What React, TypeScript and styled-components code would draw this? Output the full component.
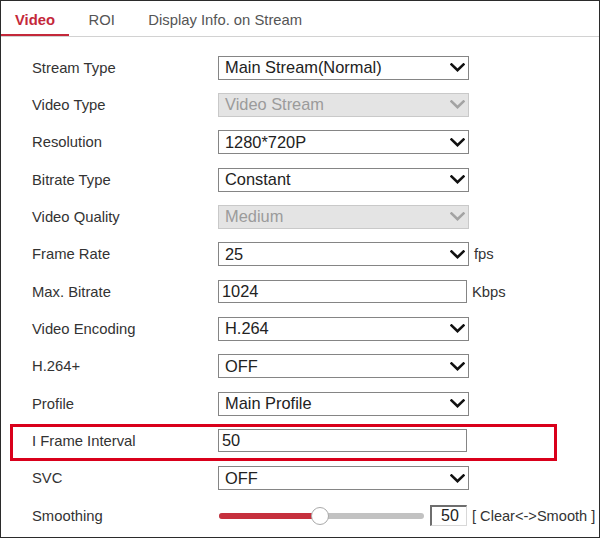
import React from "react";
import styled, { createGlobalStyle, css } from "styled-components";

const Global = createGlobalStyle`
  html, body { margin: 0; padding: 0; background: #fff; }
  body { font-family: "Liberation Sans", Arial, sans-serif; }
  * { box-sizing: border-box; }
`;

const Frame = styled.div`
  width: 600px;
  height: 538px;
  border: 1px solid #2b2b2b;
  background: #fff;
  overflow: hidden;
`;

const TabBar = styled.div`
  display: flex;
  gap: 6px;
  height: 36px;
  border-bottom: 1px solid #d2d2d2;
`;

const Tab = styled.div<{ $active?: boolean }>`
  display: flex;
  align-items: center;
  padding: 2px 13.5px 0 14px;
  font-size: 14.8px;
  color: #555;
  ${(p) =>
    p.$active &&
    css`
      color: #c4283a;
      font-weight: bold;
      box-shadow: inset 0 -2px 0 #c4283a;
    `}
`;

const Form = styled.div`
  padding: 12px 0 0 31px;
`;

const Row = styled.div<{ $highlight?: boolean }>`
  position: relative;
  display: grid;
  grid-template-columns: 186px 1fr;
  align-items: center;
  height: 37.33px;
  ${(p) =>
    p.$highlight &&
    css`
      &::after {
        content: "";
        position: absolute;
        left: -22px;
        right: 42px;
        top: 2px;
        bottom: -1px;
        border: 3px solid #d9001b;
        pointer-events: none;
      }
    `}
`;

const Label = styled.div`
  font-size: 14.8px;
  color: #333;
`;

const Control = styled.div`
  display: flex;
  align-items: center;
`;

const SelectBox = styled.div<{ $disabled?: boolean }>`
  display: flex;
  align-items: center;
  justify-content: space-between;
  width: 251px;
  height: 24px;
  padding: 0 3px 0 6px;
  border: 1px solid ${(p) => (p.$disabled ? "#c9c9c9" : "#858585")};
  background: ${(p) => (p.$disabled ? "#e4e4e4" : "#fff")};
  color: ${(p) => (p.$disabled ? "#9b9b9b" : "#222")};
  font-size: 16.4px;
`;

const TextBox = styled.input`
  width: 249px;
  height: 23px;
  padding: 0 0 0 3px;
  border: 1px solid #858585;
  font-family: "Liberation Sans", Arial, sans-serif;
  font-size: 16.4px;
  color: #222;
  background: #fff;
  outline: none;
`;

const Unit = styled.span`
  margin-left: 5px;
  font-size: 14.8px;
  color: #333;
`;

const SliderTrack = styled.div`
  position: relative;
  width: 205px;
  height: 6px;
  margin-left: 1px;
  border-radius: 3px;
  background: #c2c2c2;
`;

const SliderFill = styled.div`
  height: 100%;
  border-radius: 3px 0 0 3px;
  background: #c6303d;
`;

const SliderThumb = styled.div`
  position: absolute;
  top: 50%;
  width: 18px;
  height: 18px;
  margin: -9px 0 0 -9px;
  border-radius: 50%;
  background: #fff;
  border: 1px solid #a9a9a9;
`;

const ValueBox = styled.div`
  display: flex;
  align-items: center;
  justify-content: center;
  width: 37px;
  height: 21px;
  margin-left: 6px;
  padding-left: 2px;
  border-top: 2px solid #6e6e6e;
  border-left: 2px solid #6e6e6e;
  border-right: 1px solid #d8d8d8;
  border-bottom: 1px solid #d8d8d8;
  font-size: 16px;
  color: #222;
`;

const Hint = styled.span`
  margin-left: 5px;
  font-size: 14.6px;
  color: #333;
`;

const Chevron = ({ color }: { color: string }) => (
  <svg width="15" height="9" viewBox="0 0 15 9">
    <path d="M1.5 1.5 L7.5 7.2 L13.5 1.5" fill="none" stroke={color} strokeWidth="2.6" strokeLinecap="square" />
  </svg>
);

const Select = ({ value, disabled }: { value: string; disabled?: boolean }) => (
  <SelectBox $disabled={disabled}>
    <span>{value}</span>
    <Chevron color={disabled ? "#a3a3a3" : "#111"} />
  </SelectBox>
);

type Field =
  | { label: string; kind: "select"; value: string; disabled?: boolean; unit?: string }
  | { label: string; kind: "input"; value: string; unit?: string; highlight?: boolean };

const fields: Field[] = [
  { label: "Stream Type", kind: "select", value: "Main Stream(Normal)" },
  { label: "Video Type", kind: "select", value: "Video Stream", disabled: true },
  { label: "Resolution", kind: "select", value: "1280*720P" },
  { label: "Bitrate Type", kind: "select", value: "Constant" },
  { label: "Video Quality", kind: "select", value: "Medium", disabled: true },
  { label: "Frame Rate", kind: "select", value: "25", unit: "fps" },
  { label: "Max. Bitrate", kind: "input", value: "1024", unit: "Kbps" },
  { label: "Video Encoding", kind: "select", value: "H.264" },
  { label: "H.264+", kind: "select", value: "OFF" },
  { label: "Profile", kind: "select", value: "Main Profile" },
  { label: "I Frame Interval", kind: "input", value: "50", highlight: true },
  { label: "SVC", kind: "select", value: "OFF" },
];

export default function App() {
  const smoothing = 50;
  const trackWidth = 205;
  const pos = Math.round((trackWidth * smoothing) / 100) - 2;
  return (
    <>
      <Global />
      <Frame>
        <TabBar>
          <Tab $active>Video</Tab>
          <Tab>ROI</Tab>
          <Tab>Display Info. on Stream</Tab>
        </TabBar>
        <Form>
          {fields.map((f) => (
            <Row key={f.label} $highlight={f.kind === "input" && f.highlight}>
              <Label>{f.label}</Label>
              <Control>
                {f.kind === "select" ? (
                  <Select value={f.value} disabled={f.disabled} />
                ) : (
                  <TextBox defaultValue={f.value} readOnly />
                )}
                {f.unit && <Unit>{f.unit}</Unit>}
              </Control>
            </Row>
          ))}
          <Row>
            <Label>Smoothing</Label>
            <Control>
              <SliderTrack>
                <SliderFill style={{ width: pos }} />
                <SliderThumb style={{ left: pos }} />
              </SliderTrack>
              <ValueBox>{smoothing}</ValueBox>
              <Hint>[ Clear&lt;-&gt;Smooth ]</Hint>
            </Control>
          </Row>
        </Form>
      </Frame>
    </>
  );
}
